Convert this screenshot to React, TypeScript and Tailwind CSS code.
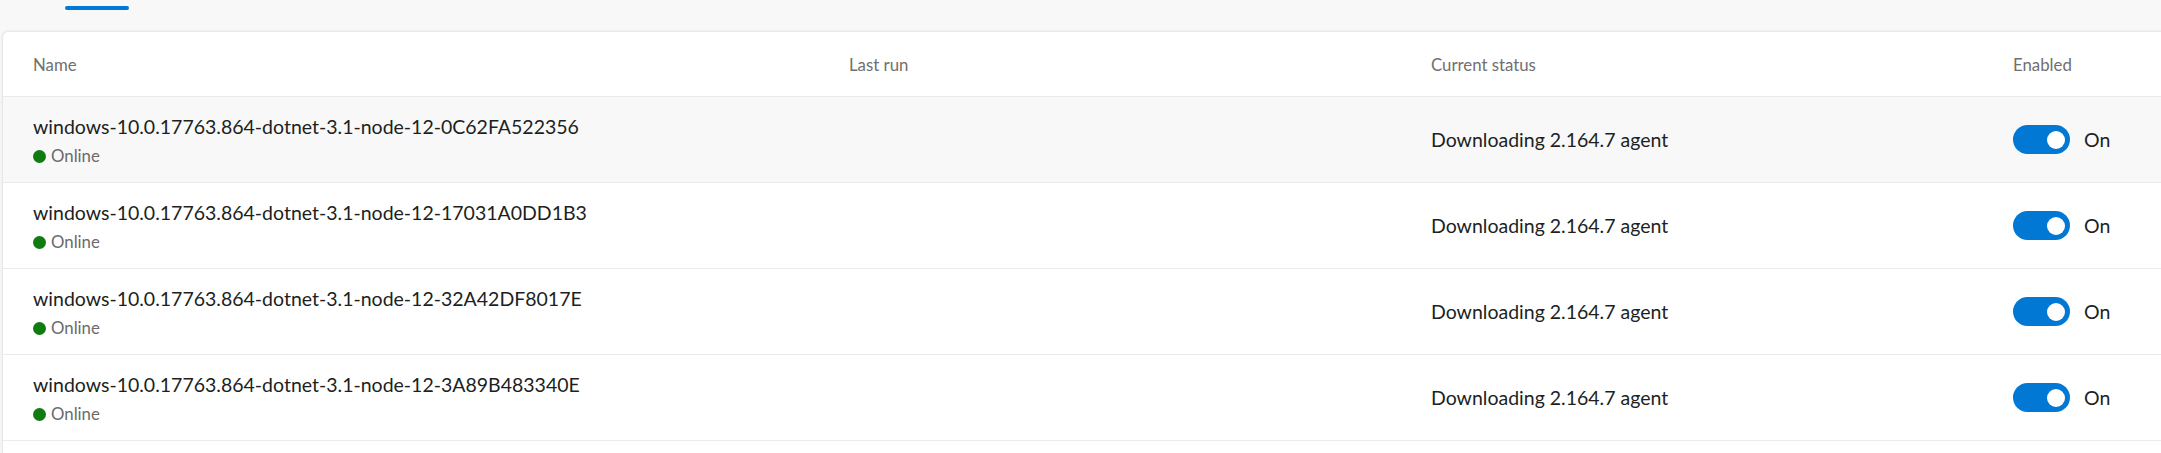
import React from "react";

const rows = [
  { name: "windows-10.0.17763.864-dotnet-3.1-node-12-0C62FA522356", hover: true },
  { name: "windows-10.0.17763.864-dotnet-3.1-node-12-17031A0DD1B3", hover: false },
  { name: "windows-10.0.17763.864-dotnet-3.1-node-12-32A42DF8017E", hover: false },
  { name: "windows-10.0.17763.864-dotnet-3.1-node-12-3A89B483340E", hover: false },
];

function Toggle() {
  return (
    <div className="flex items-center gap-[14px]">
      <div className="flex h-[29px] w-[57px] items-center justify-end rounded-full bg-[#0078d4] pr-[5px]">
        <div className="h-[18px] w-[18px] rounded-full bg-white" />
      </div>
      <span className="text-[19.5px] leading-none text-[#201f1e]">On</span>
    </div>
  );
}

export default function App() {
  return (
    <div
      className="flex h-[453px] w-full flex-col overflow-hidden bg-[#f8f8f8]"
      style={{ fontFamily: '"Segoe UI", Lato, "Noto Sans", sans-serif' }}
    >
      <div className="h-[31px] shrink-0 pl-[65px] pt-[6px]">
        <div className="h-[4px] w-[64px] rounded-full bg-[#0078d4]" />
      </div>
      <div className="ml-[2px] mr-[-10px] flex-1 rounded-tl-[6px] border-l border-t border-[#e8e8e8] bg-white shadow-[0_0_3px_rgba(0,0,0,0.08)]">
        <div className="grid h-[65px] grid-cols-[816px_582px_582px_1fr] items-center border-b border-[#ebebeb] pl-[30px] pt-[2px] text-[16.8px] text-[#707070]">
          <div>Name</div>
          <div>Last run</div>
          <div>Current status</div>
          <div>Enabled</div>
        </div>
        {rows.map((r) => (
          <div
            key={r.name}
            className={`grid h-[86px] grid-cols-[816px_582px_582px_1fr] items-center border-b border-[#ebebeb] pl-[30px] ${
              r.hover ? "bg-[#f8f8f8]" : "bg-white"
            }`}
          >
            <div className="flex flex-col pt-[2px]">
              <div className="text-[19.5px] leading-[26px] text-[#201f1e]">{r.name}</div>
              <div className="mt-[5px] flex items-center gap-[5px] text-[16.8px] leading-[22px] text-[#6b6b6b]">
                <span className="h-[13px] w-[13px] rounded-full bg-[#107c10]" />
                <span>Online</span>
              </div>
            </div>
            <div />
            <div className="text-[19.5px] text-[#201f1e]">Downloading 2.164.7 agent</div>
            <div>
              <Toggle />
            </div>
          </div>
        ))}
      </div>
    </div>
  );
}
